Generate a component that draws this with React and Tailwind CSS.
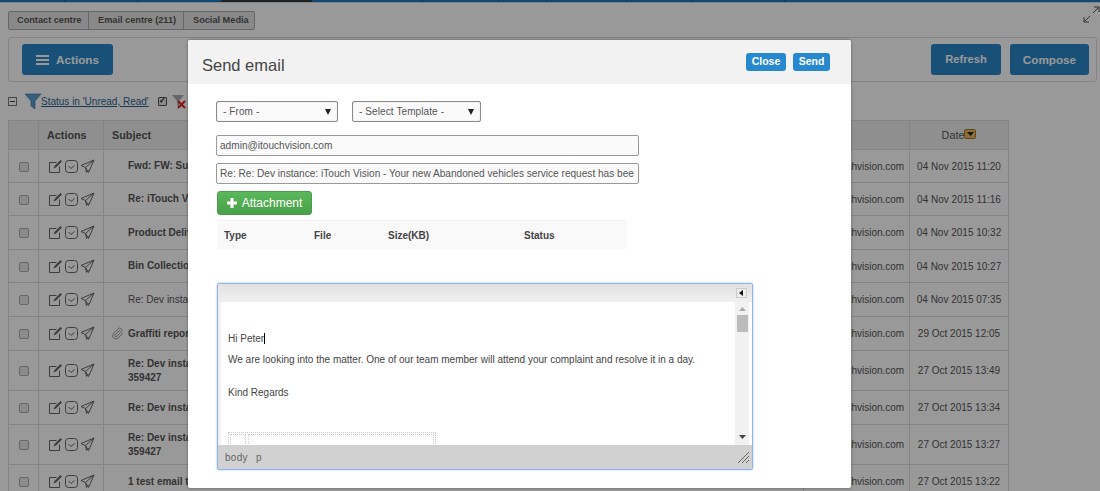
import { Paperclip } from "lucide-react";

const FONT = "font-['Liberation_Sans',Arial,sans-serif]";

function EditIcon() {
  return (
    <svg width="15" height="15" viewBox="0 0 15 15" fill="none" stroke="#666" strokeWidth="1">
      <path d="M11.5 7.5v6h-10v-10h7" />
      <path d="M5.5 9.5l1-2.5 6-6 1.5 1.5-6 6z" fill="#666" stroke="none" />
    </svg>
  );
}
function CheckIcon() {
  return (
    <svg width="15" height="15" viewBox="0 0 15 15" fill="none" stroke="#666" strokeWidth="1">
      <rect x="1.5" y="1.5" width="12" height="12" rx="3" />
      <path d="M4.5 7l2.5 2.5 3.5-3" />
    </svg>
  );
}
function SendIcon() {
  return (
    <svg width="15" height="15" viewBox="0 0 15 15" fill="none" stroke="#666" strokeWidth="1">
      <path d="M14 1L1 6.5l4.5 2L8.5 13.5z" />
      <path d="M14 1L5.5 8.5l1 5 2-2.5" />
    </svg>
  );
}

const rows = [
  { s: "Fwd: FW: Suggestion for website", d: "04 Nov 2015 11:20", h: "h-[33px]", b: true },
  { s: "Re: iTouch Vision enquiry", d: "04 Nov 2015 11:16", h: "h-[33px]", b: true },
  { s: "Product Delivery request", d: "04 Nov 2015 10:32", h: "h-[34px]", b: true },
  { s: "Bin Collection missed", d: "04 Nov 2015 10:27", h: "h-[33px]", b: true },
  { s: "Re: Dev instance request", d: "04 Nov 2015 07:35", h: "h-[34px]", b: false },
  { s: "Graffiti report", d: "29 Oct 2015 12:05", h: "h-[34px]", b: true, clip: true },
  { s: "Re: Dev instance request", s2: "359427", d: "27 Oct 2015 13:49", h: "h-[40px]", b: true },
  { s: "Re: Dev instance request", d: "27 Oct 2015 13:34", h: "h-[34px]", b: true },
  { s: "Re: Dev instance request", s2: "359427", d: "27 Oct 2015 13:27", h: "h-[40px]", b: true },
  { s: "1 test email to check", d: "27 Oct 2015 13:22", h: "h-[34px]", b: true },
];

function Select({ label, w }) {
  return (
    <div className={`${w} flex h-[21px] items-center justify-between rounded-[2px] border border-[#8a8a8a] bg-[#fafafa] pl-[6px] pr-[6px] text-[10px] tracking-[0.1px] text-[#555] shadow-[inset_0_0_1px_rgba(0,0,0,0.3)]`}>
      <span>{label}</span>
      <svg width="6" height="6" viewBox="0 0 6 6"><path d="M0 0h6L3 6z" fill="#222" /></svg>
    </div>
  );
}

export default function App() {
  return (
    <div className={`${FONT} relative h-[491px] w-[1100px] overflow-hidden bg-white text-[#555]`}>
      {/* top strip */}
      <div className="flex h-[3px] border-b border-[#dddddd]">
        <div className="w-[65px] border-r border-[#175a92] bg-[#1f78c1]" />
        <div className="w-[73px] border-r border-[#175a92] bg-[#1f78c1]" />
        <div className="w-[83px] bg-[#1f78c1]" />
        <div className="w-[91px] bg-[#333b40]" />
        <div className="w-[111px] border-r border-[#175a92] bg-[#1f78c1]" />
        <div className="w-[76px] border-r border-[#175a92] bg-[#1f78c1]" />
        <div className="w-[48px] border-r border-[#175a92] bg-[#1f78c1]" />
        <div className="w-[80px] border-r border-[#175a92] bg-[#1f78c1]" />
        <div className="w-[66px] border-r border-[#175a92] bg-[#1f78c1]" />
        <div className="w-[92px] border-r border-[#175a92] bg-[#1f78c1]" />
        <div className="flex-1 bg-[#1f78c1]" />
      </div>

      <div className="px-2 pt-[8px]">
        <div className="flex h-[19px] w-[247px] items-center rounded-[2px] border border-[#aaa] bg-[#e5e5e5] text-[9.2px] font-bold text-[#555]">
          <span className="w-[80px] border-r border-[#aaa] pl-[8px] leading-[17px]">Contact centre</span>
          <span className="w-[95px] border-r border-[#aaa] pl-[9px] leading-[17px]">Email centre (211)</span>
          <span className="flex-1 pl-[9px] leading-[17px]">Social Media</span>
        </div>

        <div className="mt-[7px] flex h-[45px] w-[1089px] items-center justify-between rounded-[3px] border border-[#ddd] pl-[13px] pr-[7px]">
          <button className="flex h-[31px] w-[91px] items-center justify-center gap-[7px] rounded-[3px] bg-[#2a85c9] text-[11.7px] font-bold text-white">
            <svg width="13" height="10" viewBox="0 0 13 10" fill="#fff"><rect width="13" height="2" /><rect y="4" width="13" height="2" /><rect y="8" width="13" height="2" /></svg>
            Actions
          </button>
          <div className="flex gap-[9px]">
            <button className="h-[31px] w-[70px] rounded-[3px] bg-[#2a85c9] text-[11.2px] font-bold text-white">Refresh</button>
            <button className="h-[31px] w-[79px] rounded-[3px] bg-[#2a85c9] text-[11.7px] font-bold text-white">Compose</button>
          </div>
        </div>

        <div className="mt-[9px] flex h-[20px] items-center text-[10px]">
          <span className="flex h-[9px] w-[9px] items-center justify-center border border-[#777]"><span className="h-[1px] w-[5px] bg-[#444]" /></span>
          <svg className="ml-[8px]" width="16" height="16" viewBox="0 0 16 16"><path d="M0 1h16L10 8v8L6 13V8z" fill="#5a9fd4" stroke="#2e6a9a" strokeWidth="0.6" /></svg>
          <span className="text-[#2b5f8e] underline">Status in 'Unread, Read'</span>
          <span className="ml-[9px] flex h-[9px] w-[9px] items-center justify-center rounded-[1px] border border-[#555] bg-[#e5e5e5] text-[8px] font-bold leading-none text-[#111]">✓</span>
          <svg className="ml-[5px]" width="15" height="15" viewBox="0 0 15 15"><path d="M0 1h12L7 7v6L5 11V7z" fill="#aaa" /><path d="M6 7l7 7M13 7l-7 7" stroke="#e02020" strokeWidth="2" /></svg>
        </div>

        <table className="mt-[9px] w-[1000px] table-fixed border-collapse text-[10px]">
          <colgroup>
            <col className="w-[30px]" />
            <col className="w-[65px]" />
            <col className="w-[700px]" />
            <col className="w-[106px]" />
            <col className="w-[99px]" />
          </colgroup>
          <thead>
            <tr className="h-[29px] bg-[#eeeeee] text-[10.8px] font-bold">
              <th className="border border-[#ddd]" />
              <th className="border border-[#ddd] pl-[8px] text-left font-bold">Actions</th>
              <th className="border border-[#ddd] pl-[8px] text-left font-bold">Subject</th>
              <th className="border border-[#ddd]" />
              <th className="border border-[#ddd] font-normal">
                <span className="inline-flex items-center">Date
                  <span className="mb-[3px] flex h-[10px] w-[12px] items-center justify-center rounded-[2px] border border-[#a87a20] bg-[#e8b860]">
                    <svg width="7" height="4" viewBox="0 0 7 4"><path d="M0 0h7L3.5 4z" fill="#222" /></svg>
                  </span>
                </span>
              </th>
            </tr>
          </thead>
          <tbody>
            {rows.map((r, i) => (
              <tr key={i} className={r.h}>
                <td className="border border-[#ddd] text-center">
                  <span className="inline-block h-[10px] w-[10px] rounded-[2px] border border-[#aaa] bg-[#e8e8e8] align-middle" />
                </td>
                <td className="border border-[#ddd] pl-[9px]">
                  <div className="flex items-center gap-[1px]">
                    <EditIcon /><CheckIcon /><SendIcon />
                  </div>
                </td>
                <td className={`border border-[#ddd] leading-[13.5px] ${r.clip ? "pl-[7px]" : "pl-[24px]"} ${r.b ? "font-bold" : ""}`}>
                  {r.clip ? <Paperclip className="mr-[4px] inline-block align-middle" size={13} color="#888" strokeWidth={1.5} /> : null}
                  {r.s}
                  {r.s2 ? <><br />{r.s2}</> : null}
                </td>
                <td className="border border-[#ddd] pr-[6px] text-right">info@itouchvision.com</td>
                <td className="border border-[#ddd] text-center">{r.d}</td>
              </tr>
            ))}
          </tbody>
        </table>
      </div>

      {/* expand icon */}
      <svg className="absolute left-[1083px] top-[6px]" width="17" height="17" viewBox="0 0 17 17" fill="none" stroke="#555" strokeWidth="1">
        <path d="M1 16L7 10M1 11v5h5M16 1l-6 6M11 1h5v5" />
      </svg>

      {/* backdrop */}
      <div className="absolute inset-0 bg-black/40" />

      {/* modal */}
      <div className="absolute left-[188px] top-[40px] h-[448px] w-[663px] overflow-hidden rounded-[2px] bg-white shadow-[0_0_3px_rgba(0,0,0,0.4)]">
        <div className="flex h-[44px] items-center justify-between bg-[#f2f2f2] pl-[14px] pr-[21px]">
          <span className="pt-[7px] text-[16.5px] text-[#444]">Send email</span>
          <div className="flex gap-[7px] text-[10.5px] font-bold text-white">
            <button className="h-[18px] w-[40px] rounded-[3px] bg-[#2688cf]">Close</button>
            <button className="h-[18px] w-[37px] rounded-[3px] bg-[#2688cf]">Send</button>
          </div>
        </div>

        <div className="pl-[28px]">
          <div className="mt-[17px] flex gap-[14px]">
            <Select label="- From -" w="w-[122px]" />
            <Select label="- Select Template -" w="w-[129px]" />
          </div>
          <div className="mt-[13px] flex h-[21px] w-[423px] items-center rounded-[2px] border border-[#999] bg-[#fafafa] px-[3px] text-[10.1px] text-[#555]">admin@itouchvision.com</div>
          <div className="mt-[7px] flex h-[21px] w-[423px] items-center overflow-hidden whitespace-nowrap rounded-[2px] border border-[#999] bg-[#fafafa] px-[3px] text-[10.1px] text-[#555]">Re: Re: Dev instance: iTouch Vision - Your new Abandoned vehicles service request has bee</div>
          <button className="ml-[1px] mt-[7px] flex h-[24px] w-[95px] items-center justify-center gap-[5px] rounded-[3px] border border-[#4a9e4a] bg-[linear-gradient(#5cb85c,#48a048)] text-[12px] text-white">
            <svg width="10" height="10" viewBox="0 0 10 10" fill="#fff"><rect x="3.5" width="3" height="10" /><rect y="3.5" width="10" height="3" /></svg>
            Attachment
          </button>
          <div className="ml-[1px] mt-[5px] flex h-[29px] w-[410px] items-center border-t border-[#f2f2f2] bg-[#f9f9f9] text-[10px] font-bold text-[#444]">
            <span className="w-[97px] pl-[7px]">Type</span>
            <span className="w-[74px]">File</span>
            <span className="w-[136px]">Size(KB)</span>
            <span>Status</span>
          </div>

          <div className="ml-[1px] mt-[34px] flex h-[187px] w-[536px] flex-col rounded-[2px] border border-[#8fb4ec] shadow-[0_0_2px_#8fb4ec]">
            <div className="flex h-[18px] shrink-0 items-center justify-end bg-[linear-gradient(#e2e2e2,#f0f0f0)] pr-[5px]">
              <span className="flex h-[10px] w-[11px] items-center justify-center border border-[#ccc] bg-[#eee]">
                <svg width="5" height="6" viewBox="0 0 5 6"><path d="M4 0v6L0 3z" fill="#111" /></svg>
              </span>
            </div>
            <div className="flex min-h-0 flex-1 border-l-[3px] border-[#f0f0f0] bg-white pr-[3px]">
              <div className="min-w-0 flex-1 overflow-hidden pl-[7px] text-[10px] text-[#444]">
                <p className="mt-[29px] leading-[14px]">Hi Peter<span className="inline-block h-[11px] w-[1px] translate-y-[2px] bg-black" /></p>
                <p className="mt-[7px] leading-[14px]">We are looking into the matter. One of our team member will attend your complaint and resolve it in a day.</p>
                <p className="mt-[19px] leading-[14px]">Kind Regards</p>
                <div className="mt-[32px] flex h-[30px] w-[208px] gap-[2px] border border-dotted border-[#ccc] p-[1px]">
                  <div className="w-[16px] border border-dotted border-[#ccc]" />
                  <div className="flex-1 border border-dotted border-[#ccc]" />
                </div>
              </div>
              <div className="flex w-[14px] shrink-0 flex-col items-center bg-[#f1f1f1] pt-[5px]">
                <svg width="7" height="4" viewBox="0 0 7 4"><path d="M3.5 0L7 4H0z" fill="#aaa" /></svg>
                <div className="mt-[4px] h-[17px] w-[11px] bg-[#bbb]" />
                <div className="flex-1" />
                <svg className="mb-[6px]" width="7" height="4" viewBox="0 0 7 4"><path d="M0 0h7L3.5 4z" fill="#444" /></svg>
              </div>
            </div>
            <div className="flex h-[24px] shrink-0 items-center justify-between bg-[#d1d1d1] pl-[7px] pr-[3px] text-[10px] tracking-[0.3px] text-[#666]">
              <span className="flex gap-[8px]"><span>body</span><span>p</span></span>
              <svg width="11" height="11" viewBox="0 0 11 11" stroke="#666" strokeWidth="1"><path d="M0 11L11 0M4 11l7-7M8 11l3-3" /></svg>
            </div>
          </div>
        </div>
      </div>
    </div>
  );
}
